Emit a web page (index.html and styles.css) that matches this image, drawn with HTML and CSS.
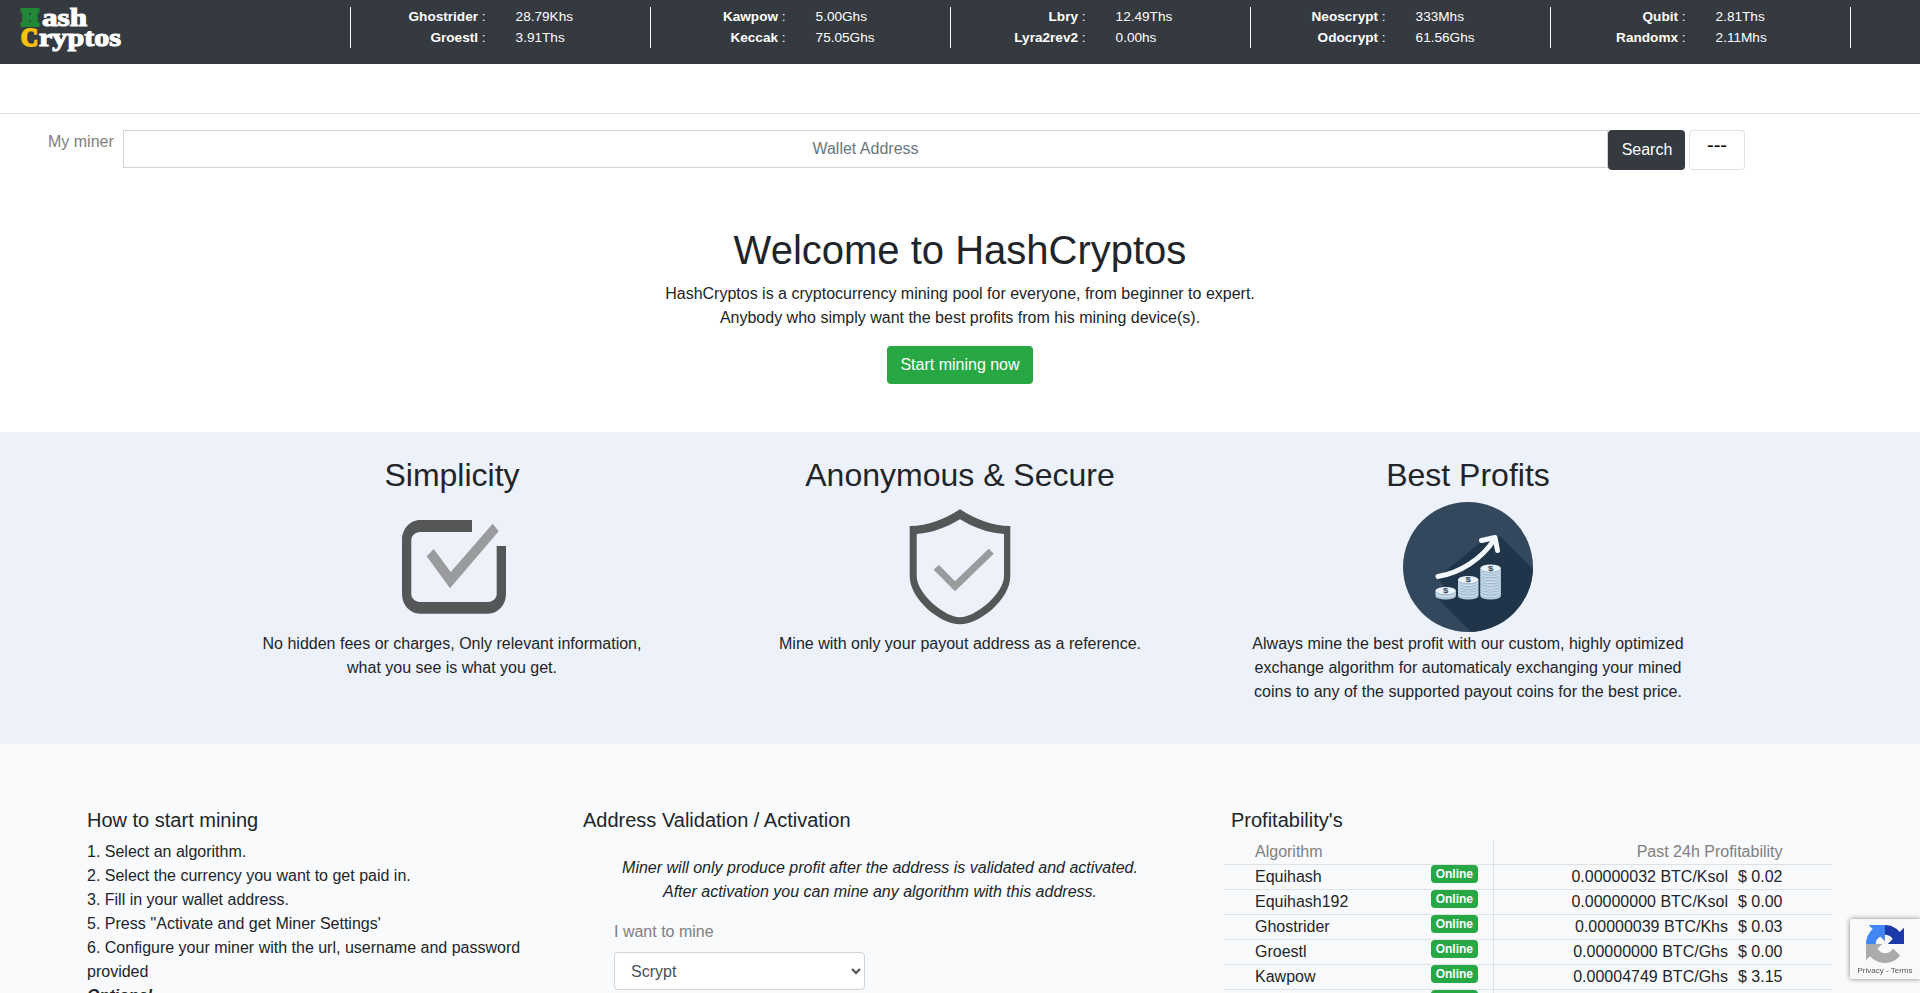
FILE: index.html
```html
<!DOCTYPE html>
<html lang="en">
<head>
    <meta charset="UTF-8">
    <meta name="viewport" content="width=device-width, initial-scale=1.0">
    <title>HashCryptos</title>
    <link rel="stylesheet" href="styles.css">
</head>
<body>
    <!-- Top bar -->
    <header class="topbar">
        <svg class="logo" width="110" height="56" viewBox="0 0 110 56">
            <text x="2" y="24.5" textLength="16" lengthAdjust="spacingAndGlyphs" class="logo-green">H</text>
            <text x="22" y="25.5" textLength="45" lengthAdjust="spacingAndGlyphs">ash</text>
            <text x="1" y="45.5" textLength="17" lengthAdjust="spacingAndGlyphs" class="logo-yellow">C</text>
            <text x="19" y="46" textLength="82" lengthAdjust="spacingAndGlyphs">ryptos</text>
        </svg>
        <div class="ticker">
            <div class="ticker-item">
                <div class="names"><b>Ghostrider</b> :<br><b>Groestl</b> :</div>
                <div>28.79Khs<br>3.91Ths</div>
            </div>
            <div class="ticker-item">
                <div class="names"><b>Kawpow</b> :<br><b>Keccak</b> :</div>
                <div>5.00Ghs<br>75.05Ghs</div>
            </div>
            <div class="ticker-item">
                <div class="names"><b>Lbry</b> :<br><b>Lyra2rev2</b> :</div>
                <div>12.49Ths<br>0.00hs</div>
            </div>
            <div class="ticker-item">
                <div class="names"><b>Neoscrypt</b> :<br><b>Odocrypt</b> :</div>
                <div>333Mhs<br>61.56Ghs</div>
            </div>
            <div class="ticker-item">
                <div class="names"><b>Qubit</b> :<br><b>Randomx</b> :</div>
                <div>2.81Ths<br>2.11Mhs</div>
            </div>
            <div class="ticker-item"></div>
        </div>
    </header>
    <nav class="subnav"></nav>

    <!-- Wallet search -->
    <form class="search">
        <label for="wallet">My miner</label>
        <input id="wallet" type="text" placeholder="Wallet Address">
        <button type="button" class="btn btn-dark">Search</button>
        <button type="button" class="btn btn-history">---</button>
    </form>

    <section class="hero">
        <h1>Welcome to HashCryptos</h1>
        <p>HashCryptos is a cryptocurrency mining pool for everyone, from beginner to expert.<br>
        Anybody who simply want the best profits from his mining device(s).</p>
        <a class="btn btn-success">Start mining now</a>
    </section>

    <!-- Features -->
    <section class="features">
        <div class="feature">
            <h2>Simplicity</h2>
            <svg width="130" height="130" viewBox="0 0 130 130">
                <path fill="#545657" d="M85 18H33C23 18 15 27 15 38V92C15 103 23 111.7 33 111.7H101C111 111.7 119 103 119 92V44H109.7V92C109.7 96 106 100 101 100H33C28 100 24.3 96 24.3 92V38C24.3 34 28 30 33 30H85Z"/>
                <path fill="#999b9d" d="M46.7 47L63.7 70L105.7 21.7L111.7 29.3L63 86.3L39.7 54.3Z"/>
            </svg>
            <p>No hidden fees or charges, Only relevant information,<br>what you see is what you get.</p>
        </div>
        <div class="feature">
            <h2>Anonymous &amp; Secure</h2>
            <svg width="130" height="130" viewBox="0 0 130 130">
                <path fill="#545657" fill-rule="evenodd" d="M65 7.3C50 17 33 24 14.7 24V74C14.7 98 46 122.3 65 122.3S115.3 98 115.3 74V24C97 24 80 17 65 7.3ZM65 17.3C52 25 38 31 21.7 32V74C21.7 92 50 115.3 65 115.3S109 92 109 74V32C92 31 78 25 65 17.3Z"/>
                <path fill="#999b9d" d="M44 63L60 79.3L93.7 46.7L98.7 51.7L60 89.3L38.7 67.7Z"/>
            </svg>
            <p>Mine with only your payout address as a reference.</p>
        </div>
        <div class="feature">
            <h2>Best Profits</h2>
            <svg width="130" height="130" viewBox="0 0 130 130">
                <defs>
                    <clipPath id="disc"><circle cx="65" cy="65" r="65"/></clipPath>
                    <g id="coin">
                        <path fill="#b9cfe0" d="M0 3.5V6a10.2 3.6 0 0 0 20.4 0V3.5Z"/>
                        <path fill="none" stroke="#7f9bb3" stroke-width=".7" d="M.3 4.5a10 3.4 0 0 0 19.8 0"/>
                        <ellipse cx="10.2" cy="3.6" rx="10.2" ry="3.6" fill="#e9f3fc"/>
                    </g>
                </defs>
                <circle cx="65" cy="65" r="65" fill="#33485c"/>
                <path clip-path="url(#disc)" fill="#20354a" d="M34 76L44 87L34 96L69 131H131V68L97 34L78 40Z"/>
                <g fill="none" stroke="#f3f8fd" stroke-width="5" stroke-linecap="round" stroke-linejoin="round">
                    <path d="M35 74.5C57 71 79 57 91.5 37"/>
                    <path d="M78.5 38.5L92 35.5L94.5 48.5"/>
                </g>
                <use href="#coin" x="32.5" y="88"/>
                <use href="#coin" x="32.5" y="85"/>
                <use href="#coin" x="55" y="88"/>
                <use href="#coin" x="55" y="85.2"/>
                <use href="#coin" x="55" y="82.4"/>
                <use href="#coin" x="55" y="79.6"/>
                <use href="#coin" x="55" y="76.8"/>
                <use href="#coin" x="55" y="74"/>
                <use href="#coin" x="77.4" y="88"/>
                <use href="#coin" x="77.4" y="85.2"/>
                <use href="#coin" x="77.4" y="82.3"/>
                <use href="#coin" x="77.4" y="79.5"/>
                <use href="#coin" x="77.4" y="76.7"/>
                <use href="#coin" x="77.4" y="73.9"/>
                <use href="#coin" x="77.4" y="71"/>
                <use href="#coin" x="77.4" y="68.2"/>
                <use href="#coin" x="77.4" y="65.3"/>
                <use href="#coin" x="77.4" y="62.5"/>
                <g class="coin-sign">
                    <text transform="translate(42.7 91) scale(1.5 1)">$</text>
                    <text transform="translate(65.2 80) scale(1.5 1)">$</text>
                    <text transform="translate(87.6 68.5) scale(1.5 1)">$</text>
                </g>
            </svg>
            <p>Always mine the best profit with our custom, highly optimized exchange algorithm for automaticaly exchanging your mined coins to any of the supported payout coins for the best price.</p>
        </div>
    </section>

    <section class="start">
        <div class="howto">
            <h5>How to start mining</h5>
            1. Select an algorithm.<br>
            2. Select the currency you want to get paid in.<br>
            3. Fill in your wallet address.<br>
            5. Press ''Activate and get Miner Settings'<br>
            6. Configure your miner with the url, username and password provided<br>
            <b><i>Optional</i></b>
        </div>

        <div class="validation">
            <h5>Address Validation / Activation</h5>
            <p class="note">Miner will only produce profit after the address is validated and activated.<br>
            After activation you can mine any algorithm with this address.</p>
            <div class="field">
                <label for="algo">I want to mine</label>
                <select id="algo">
                    <option>Scrypt</option>
                </select>
            </div>
        </div>

        <div class="profit">
            <h5>Profitability's</h5>
            <div class="profit-row profit-head">
                <div class="algo">Algorithm</div>
                <div class="amount">Past 24h Profitability</div>
            </div>
            <div class="profit-row">
                <div class="algo">Equihash <span class="badge">Online</span></div>
                <div class="amount">0.00000032 BTC/Ksol <span>$ 0.02</span></div>
            </div>
            <div class="profit-row">
                <div class="algo">Equihash192 <span class="badge">Online</span></div>
                <div class="amount">0.00000000 BTC/Ksol <span>$ 0.00</span></div>
            </div>
            <div class="profit-row">
                <div class="algo">Ghostrider <span class="badge">Online</span></div>
                <div class="amount">0.00000039 BTC/Khs <span>$ 0.03</span></div>
            </div>
            <div class="profit-row">
                <div class="algo">Groestl <span class="badge">Online</span></div>
                <div class="amount">0.00000000 BTC/Ghs <span>$ 0.00</span></div>
            </div>
            <div class="profit-row">
                <div class="algo">Kawpow <span class="badge">Online</span></div>
                <div class="amount">0.00004749 BTC/Ghs <span>$ 3.15</span></div>
            </div>
            <div class="profit-row">
                <div class="algo"><span class="badge">Online</span></div>
                <div class="amount"></div>
            </div>
        </div>
    </section>

    <div class="recaptcha">
        <svg width="38" height="38" viewBox="0 0 64 64">
            <path fill="#1C3AA9" d="M64 31.955l-.033-1.37V4.687l-7.16 7.16C50.948 4.674 42.033.093 32.05.093c-10.4 0-19.622 4.96-25.458 12.64l11.736 11.86a15.55 15.55 0 0 1 4.754-5.334c2.05-1.6 4.952-2.906 8.968-2.906.485 0 .86.057 1.135.163 4.976.393 9.288 3.14 11.828 7.124l-8.307 8.307L64 31.953"/>
            <path fill="#4285F4" d="M31.862.094l-1.37.033H4.594l7.16 7.16C4.58 13.147 0 22.06 0 32.046c0 10.4 4.96 19.622 12.64 25.458L24.5 45.768a15.55 15.55 0 0 1-5.334-4.754c-1.6-2.05-2.906-4.952-2.906-8.968 0-.485.057-.86.163-1.135.393-4.976 3.14-9.288 7.124-11.828l8.307 8.307L31.86.095"/>
            <path fill="#ABABAB" d="M.001 32.045l.033 1.37v25.898l7.16-7.16c5.86 7.173 14.774 11.754 24.76 11.754 10.4 0 19.622-4.96 25.458-12.64l-11.736-11.86a15.55 15.55 0 0 1-4.754 5.334c-2.05 1.6-4.952 2.906-8.968 2.906-.485 0-.86-.057-1.135-.163-4.976-.393-9.288-3.14-11.828-7.124l8.307-8.307c-10.522.04-22.4.066-27.295-.005"/>
        </svg>
        <div>Privacy - Terms</div>
    </div>
</body>
</html>
```
FILE: styles.css
```css
* {
    box-sizing: border-box;
}

body {
    margin: 0;
    height: 993px;
    overflow: hidden;
    font-family: "Liberation Sans", Arial, sans-serif;
    font-size: 16px;
    line-height: 1.5;
    color: #212529;
    background-color: #fff;
}

h1, h2, h5 {
    margin: 0 0 8px;
    font-weight: 400;
    line-height: 1.2;
}

h1 {
    font-size: 40px;
}

h2 {
    font-size: 32px;
}

h5 {
    font-size: 20px;
}

p {
    margin: 0 0 16px;
}

/* Top bar */
.topbar {
    display: flex;
    height: 64px;
    padding-left: 20px;
    background-color: #343a40;
    color: #fff;
}

.logo {
    margin-right: 220px;
    font-family: "Liberation Serif", serif;
    font-size: 25px;
    font-weight: 700;
    fill: #fff;
    stroke: #fff;
    stroke-width: 1.1px;
}

.logo-green {
    font-size: 23px;
    fill: #218838;
    stroke: #218838;
    stroke-width: 4px;
}

.logo-yellow {
    fill: #ffc107;
    stroke: #ffc107;
    stroke-width: 2px;
}

.ticker {
    display: flex;
    padding-top: 7px;
    font-size: 13.6px;
    line-height: 21px;
}

.ticker-item {
    display: flex;
    gap: 30px;
    width: 300px;
    height: 41px;
    border-left: 1px solid #f8f9fa;
}

.ticker-item:last-child {
    width: 50px;
}

.ticker-item div {
    margin-top: -1px;
}

.names {
    width: 134.6px;
    text-align: right;
}

.subnav {
    height: 50px;
    border-bottom: 1px solid #dee2e6;
}

/* Search */
.search {
    display: flex;
    align-items: flex-start;
    padding: 16px 175px 0 48px;
}

.search label,
.field label {
    color: #808080;
}

.search label {
    width: 75px;
}

.search input {
    flex: 1;
    height: 38px;
    padding: 6px 12px;
    border: 1px solid #ced4da;
    font: inherit;
    text-align: center;
}

.search input::placeholder {
    color: #6c757d;
}

.btn {
    display: inline-block;
    padding: 6px 12px;
    border: 1px solid transparent;
    border-radius: 4px;
    font: inherit;
    color: #fff;
}

.btn-dark {
    width: 77px;
    height: 40px;
    padding-right: 11px;
    background-color: #343a40;
}

.btn-history {
    width: 56px;
    height: 40px;
    margin-left: 4px;
    padding: 0 0 10px;
    border-color: #dee2e6;
    background-color: #fff;
    font-size: 20px;
    line-height: 26px;
    color: #000;
}

.btn-success {
    background-color: #28a745;
}

.hero {
    padding: 56px 0 48px;
    text-align: center;
}

.hero .btn {
    display: block;
    width: 146px;
    margin: 0 auto;
}

/* Features */
.features {
    display: flex;
    justify-content: center;
    gap: 68px;
    height: 312px;
    padding-top: 24px;
    background-color: #edf1f9;
    text-align: center;
}

.feature {
    width: 440px;
}

.feature svg {
    display: block;
    margin: 0 auto;
}

.coin-sign {
    font-size: 6.5px;
    font-weight: 700;
    fill: #33485c;
    text-anchor: middle;
}

/* How to start, validation and profitability */
.start {
    display: flex;
    height: 249px;
    padding: 64px 0 0 87px;
    background-color: #f9fafc;
}

.howto {
    width: 496px;
    padding-right: 50px;
}

.validation {
    width: 641px;
}

.validation h5 {
    margin-bottom: 24px;
}

.note {
    width: 594px;
    font-style: italic;
    text-align: center;
}

.field {
    width: 251px;
    margin-left: 31px;
}

.field label {
    display: block;
    margin-bottom: 8px;
}

.field select {
    width: 100%;
    height: 38px;
    padding: 6px 12px;
    border: 1px solid #ced4da;
    border-radius: 4px;
    background-color: #fff;
    font: inherit;
    color: #495057;
}

.profit {
    width: 608px;
}

.profit h5 {
    margin-left: 7px;
}

.profit-row {
    display: flex;
    height: 25px;
    border-top: 1px solid #dee2e6;
}

.profit-head {
    height: 24px;
    border-top: none;
    color: #808080;
}

.algo {
    display: flex;
    justify-content: space-between;
    align-items: flex-start;
    width: 270px;
    padding: 0 15px 0 31px;
    border-right: 1px solid #dee2e6;
}

.amount {
    flex: 1;
    padding-right: 49.5px;
    text-align: right;
}

.amount span {
    margin-left: 5.6px;
}

.badge {
    margin-left: auto;
    padding: 3px 5px;
    border-radius: 4px;
    background-color: #28a745;
    color: #fff;
    font-size: 12px;
    font-weight: 700;
    line-height: 12px;
}

.recaptcha {
    position: fixed;
    right: 0;
    bottom: 14px;
    width: 70px;
    height: 60px;
    padding-top: 6px;
    border-radius: 2px 0 0 2px;
    background-color: #f9f9f9;
    box-shadow: 0 0 5px gray;
    font-size: 8px;
    line-height: 10px;
    color: #555;
    text-align: center;
}

.recaptcha svg {
    display: block;
    margin: 0 auto 3px;
}
```
